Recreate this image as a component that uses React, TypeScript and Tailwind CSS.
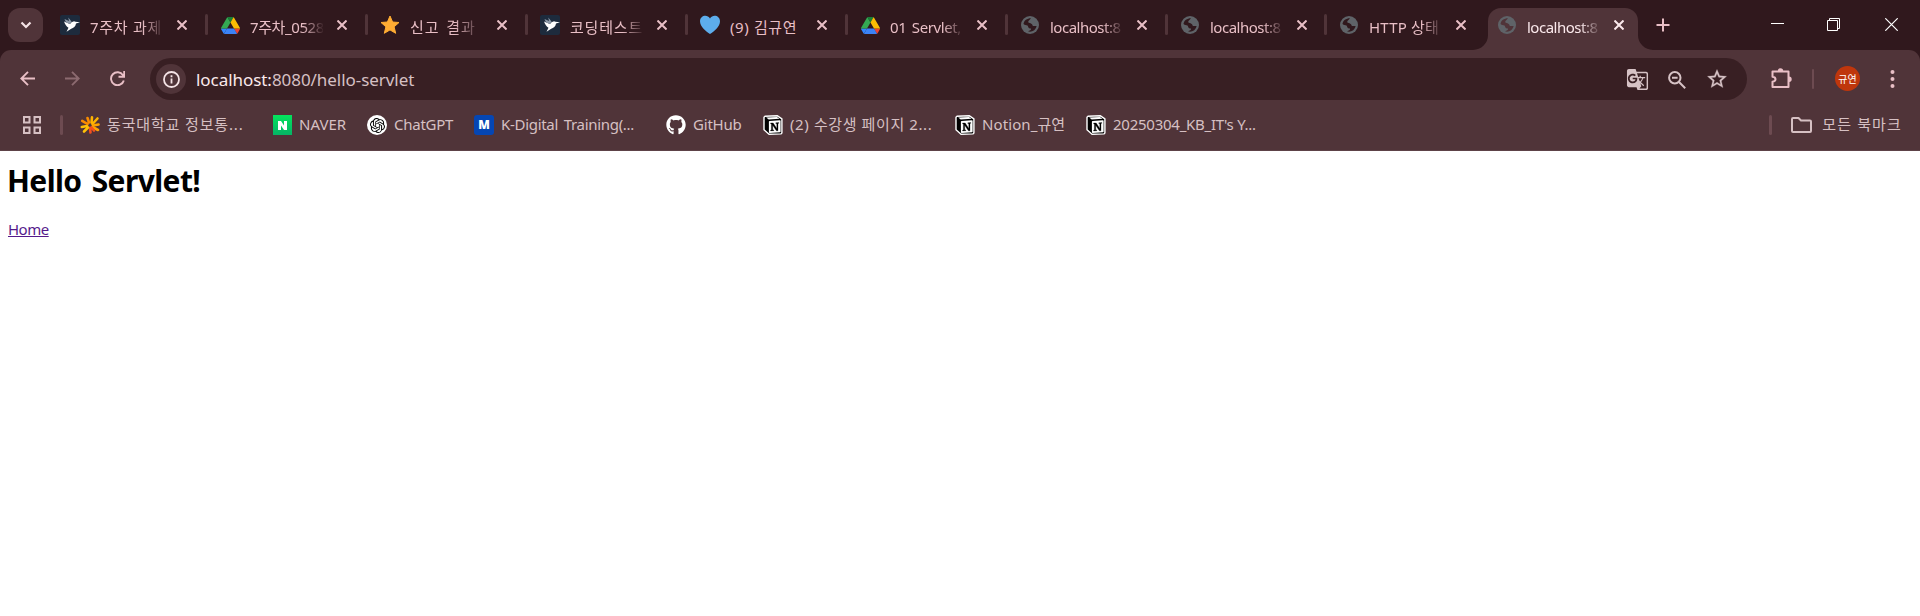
import React from "react";
import { FaGithub } from "react-icons/fa";
import { SiOpenai } from "react-icons/si";
import { MdGTranslate } from "react-icons/md";

const Swift = () => (
  <svg className="size-5" viewBox="0 0 20 20">
    <rect width="20" height="20" rx="2" fill="#1d2b3d" />
    <path d="M4 6.500 10 9 11.500 7.200 14 6.200l1.500.6L20 7.200l-4 1.300c-.3 3-2.500 4.600-4.800 5.300L6.500 16.800l2-4C6.500 11.500 5 9.500 4 6.500Z" fill="#fff" />
    <path d="M4.500 4 9 6 8.300 2.500 11.500 6.500 10 9 6 7.500Z" fill="#8c99a8" />
  </svg>
);

const Drive = () => (
  <svg className="size-[19px]" viewBox="0 0 87.300 78">
    <path d="m6.600 66.850 3.850 6.650c.8 1.400 1.950 2.500 3.300 3.300l13.750-23.800h-27.500c0 1.550.4 3.100 1.200 4.500z" fill="#3186ff" />
    <path d="m43.650 25-13.750-23.800c-1.350.8-2.500 1.900-3.300 3.300l-25.400 44a9.060 9.060 0 0 0 -1.200 4.500h27.500z" fill="#34a853" />
    <path d="m73.550 76.800c1.350-.8 2.500-1.900 3.300-3.300l1.600-2.750 7.650-13.250c.8-1.400 1.200-2.950 1.200-4.500h-27.500l5.850 11.500z" fill="#ea4335" />
    <path d="m43.650 25 13.750-23.800c-1.350-.8-2.900-1.200-4.500-1.200h-18.500c-1.600 0-3.150.45-4.500 1.200z" fill="#188038" />
    <path d="m59.800 53h-32.300l-13.750 23.800c1.350.8 2.900 1.200 4.500 1.200h50.800c1.600 0 3.150-.45 4.500-1.200z" fill="#3b82f6" />
    <path d="m73.400 26.500-12.700-22c-.8-1.400-1.950-2.500-3.300-3.300l-13.750 23.800 16.150 28h27.450c0-1.550-.4-3.100-1.200-4.500z" fill="#fbbc04" />
  </svg>
);

const StarFav = () => (
  <svg className="size-5" viewBox="0 0 20 20">
    <path d="m10 1 2.600 6 6.400.5-4.900 4.300 1.600 6.500L10 14.900l-5.700 3.400 1.600-6.500L1 7.500 7.400 7Z" fill="#ffac33" stroke="#ffac33" strokeWidth="1" strokeLinejoin="round" />
  </svg>
);

const Heart = () => (
  <svg className="size-5" viewBox="0 0 20 20">
    <path d="M10 19C6 16.500 0 12 0 6.300 0 .3 7.500-1 10 3.500 12.500-1 20 .3 20 6.300 20 12 14 16.500 10 19Z" fill="#5dadec" />
  </svg>
);

const Globe = ({ land = "#30181d" }: { land?: string }) => (
  <svg className="size-[18px]" viewBox="0 0 18 18">
    <circle cx="9" cy="9" r="9" fill="#5f6368" />
    <path d="M2.500 8C3 4.500 6 2.300 10 2.300 9 4 7.200 4.500 7.200 6 7.500 7.500 11.500 6.800 11.800 10L15.600 10C15 13.500 12 15.700 9 15.700L7 15.300C8.500 14.500 10.500 14.200 10 12.500 7 12.500 7.500 11 6.500 9.500 5 9 4 9.200 2.500 8Z" fill={land} />
  </svg>
);

const Notion = () => (
  <svg className="size-5" viewBox="0 0 20 20">
    <path d="M2 1.200 14.500.8 18.900 3.800V18l-1 .9L6 19.300 1 14.800V2.200Z" fill="#000" stroke="#fff" strokeWidth="1.400" strokeLinejoin="round" />
    <path d="M3.200 2.500 14 2l2.500 1.700L5.700 4.500Z" fill="#fff" />
    <path d="M6.500 6 17 5.300l.6.500V16.800l-.6.500L6.500 18l-.6-.5V6.600Z" fill="#fff" />
    <path d="M7.600 8h2.600l3.600 5.400V8.700l-1-.2v-.7l3-.2v.7l-.8.300v7.200h-1.600L9.700 10.200v4.500l1.100.3v.7l-3.200.2v-.7l.8-.4V8.900l-.8-.2Z" fill="#000" stroke="#000" strokeWidth=".3" />
  </svg>
);

const Flower = () => (
  <svg className="size-5" viewBox="0 0 20 20" fill="none" strokeWidth="2.600" strokeLinecap="round">
    <path d="M11.500 7.500 12 2.300M12.500 9 17.500 3.500" stroke="#ffb400" />
    <path d="M13 10.500 18.500 9.500M12.500 12 18 15" stroke="#ffa200" />
    <path d="M10 12.800 10.500 17.500M11.500 12.500 14 15.500" stroke="#f4511e" />
    <path d="M8 12.500 4 16.500M7 11 1.800 12" stroke="#ffc107" />
    <path d="M7.500 9 2.200 5.800M9 7.500 7.500 3" stroke="#fb8c00" />
  </svg>
);

const CloseX = () => (
  <svg className="size-[10px]" viewBox="0 0 10 10" fill="none" stroke="currentColor" strokeWidth="2">
    <path d="M.5.5 9.500 9.500M9.500.5.5 9.500" />
  </svg>
);

type TabItem = { icon: React.ReactNode; text: string; cls: string; track: string };

const fadeEarly = "[mask-image:linear-gradient(to_right,#000_60%,transparent_100%)]";
const fadeLate = "[mask-image:linear-gradient(to_right,#000_72%,transparent_102%)]";

const tabs: TabItem[] = [
  { icon: <Swift />, text: "7주차 과제", cls: "w-[160px]", track: `tracking-[0.7px] ${fadeLate}` },
  { icon: <Drive />, text: "7주차_0528", cls: "w-[160px]", track: `tracking-[-0.4px] ${fadeLate}` },
  { icon: <StarFav />, text: "신고 결과", cls: "w-[160px]", track: `tracking-[0.9px] [word-spacing:2px] ${fadeEarly}` },
  { icon: <Swift />, text: "코딩테스트", cls: "w-[160px]", track: `tracking-[0.8px] ${fadeLate}` },
  { icon: <Heart />, text: "(9) 김규연", cls: "w-[160px]", track: "tracking-[0.6px]" },
  { icon: <Drive />, text: "01 Servlet,", cls: "w-[160px]", track: `tracking-[-0.4px] [word-spacing:2px] ${fadeLate}` },
  { icon: <Globe />, text: "localhost:8", cls: "w-[160px]", track: `tracking-[-0.5px] ${fadeLate}` },
  { icon: <Globe />, text: "localhost:8", cls: "w-[159px]", track: `tracking-[-0.5px] ${fadeLate}` },
  { icon: <Globe />, text: "HTTP 상태", cls: "w-[161px]", track: `tracking-[0.2px] ${fadeLate}` },
];

function Tab({ t, last }: { t: TabItem; last: boolean }) {
  return (
    <div className={`flex h-[50px] shrink-0 items-center pl-3 text-[#e9bfc6] ${t.cls}`}>
      <span className="flex w-5 shrink-0 justify-center">{t.icon}</span>
      <span className={`ml-[10px] w-[73px] shrink-0 overflow-hidden whitespace-nowrap pt-[4px] text-[15px] leading-6 ${t.track}`}>{t.text}</span>
      <span className="ml-[14px] flex shrink-0">
        <CloseX />
      </span>
      {!last && <span className="ml-auto mt-[-1px] h-[21px] w-[3px] rounded-sm bg-[#503439]" />}
    </div>
  );
}

function TabStrip() {
  return (
    <header className="flex h-[50px] bg-[#30181d]">
      <div className="ml-2 mr-[5px] mt-2 flex h-[34px] w-[35px] shrink-0 items-center justify-center rounded-[12px] bg-[#503439] text-[#f5e3e6]">
        <svg className="size-[12px]" viewBox="0 0 12 12" fill="none" stroke="currentColor" strokeWidth="2.200">
          <path d="m1.500 3.500 4.500 4.500 4.500-4.500" />
        </svg>
      </div>
      {tabs.map((t, i) => (
        <Tab key={i} t={t} last={i === tabs.length - 1} />
      ))}
      <div className="relative mt-2 flex h-[42px] w-[150px] shrink-0 items-start rounded-t-[13px] bg-[#503439] pl-[10px] text-[#fbe9ec]">
        <svg className="absolute bottom-0 left-[-15px] h-[15px] w-[15px]" viewBox="0 0 15 15">
          <path d="M15 0v15H0A15 15 0 0 0 15 0Z" fill="#503439" />
        </svg>
        <svg className="absolute bottom-0 right-[-15px] h-[15px] w-[15px]" viewBox="0 0 15 15">
          <path d="M0 0v15h15A15 15 0 0 1 0 0Z" fill="#503439" />
        </svg>
        <span className="mt-2">
          <Globe land="#503439" />
        </span>
        <span className={`ml-[11px] mt-[7px] w-[73px] shrink-0 overflow-hidden whitespace-nowrap text-[15px] leading-6 tracking-[-0.5px] ${fadeLate}`}>localhost:8</span>
        <span className="ml-[14px] mt-3">
          <CloseX />
        </span>
      </div>
      <svg className="ml-[18px] mt-[18px] size-[14px] text-[#e9bfc6]" viewBox="0 0 14 14" stroke="currentColor" strokeWidth="2">
        <path d="M7 .5v13M.5 7h13" />
      </svg>
      <div className="ml-auto flex gap-11 pr-[22px] pt-[18px] text-white">
        <svg className="size-[13px]" viewBox="0 0 13 13" stroke="currentColor">
          <path d="M0 5.500h13" />
        </svg>
        <svg className="mr-px size-[13px] -ml-px" viewBox="0 0 13 13" fill="none" stroke="currentColor">
          <path d="M.5 2.500h10v10H.5ZM2.500 2.500v-2h10v10h-2" />
        </svg>
        <svg className="size-[13px]" viewBox="0 0 13 13" stroke="currentColor" strokeWidth="1.200">
          <path d="M.3.3l12.400 12.400M12.700.3.3 12.700" />
        </svg>
      </div>
    </header>
  );
}

function Toolbar() {
  return (
    <div className="flex h-[50px] items-start rounded-t-[11px] bg-[#503439] pl-5 pt-2 text-[#e9bfc6]">
      <svg className="mt-[13px] size-[15px]" viewBox="0 0 15 15" fill="none" stroke="currentColor" strokeWidth="1.900">
        <path d="M15 7.500H1.500M8 .8 1.300 7.500 8 14.200" />
      </svg>
      <svg className="ml-[30px] mt-[13px] size-[15px] text-[#8c6a70]" viewBox="0 0 15 15" fill="none" stroke="currentColor" strokeWidth="1.900">
        <path d="M0 7.500h13.500M7 .8l6.700 6.700L7 14.200" />
      </svg>
      <svg className="ml-[30px] mt-[13px] size-[15px]" viewBox="0 0 15 15" fill="none" stroke="currentColor" strokeWidth="1.900">
        <path d="M13.800 9.500A6.500 6.500 0 1 1 13 4.200L14 5.500M14.200 0v5.800H8.500" />
      </svg>
      <div className="ml-[25px] flex h-[42px] w-[1597px] items-center rounded-full bg-[#381f23] pl-[6px] pr-[20px]">
        <span className="flex size-[30px] items-center justify-center rounded-full bg-[#503439] text-[#f5e3e6]">
          <svg className="size-[17px]" viewBox="0 0 17 17" fill="none" stroke="currentColor" strokeWidth="1.800">
            <circle cx="8.500" cy="8.500" r="7.500" />
            <path d="M8.500 7.500v5M8.500 4.300v1.900" />
          </svg>
        </span>
        <span className="ml-[10px] pt-px text-[17px] leading-6 tracking-[-0.05px] text-[#d6c0c3]">
          <span className="text-[#fbe9ec]">localhost:</span>8080/hello-servlet
        </span>
        <div className="ml-auto flex items-center text-[#d6c2c5]">
          <MdGTranslate className="mt-px size-[23px]" />
          <svg className="ml-[19px] mt-px size-[18px]" viewBox="0 0 18 18" fill="none" stroke="currentColor" strokeWidth="2">
            <circle cx="6.800" cy="6.800" r="5.700" />
            <path d="M11 11l6.200 6.200M4 6.800h5.600" />
          </svg>
          <svg className="ml-[21px] size-5" viewBox="1.500 1.500 21 21" fill="currentColor">
            <path stroke="currentColor" strokeWidth=".3" d="m22 9.240-7.190-.62L12 2 9.190 8.630 2 9.240l5.460 4.730L5.820 21 12 17.270 18.180 21l-1.630-7.030L22 9.240zM12 15.400l-3.760 2.270 1-4.280-3.320-2.880 4.380-.38L12 6.100l1.710 4.040 4.380.38-3.320 2.880 1 4.280L12 15.400z" />
          </svg>
        </div>
      </div>
      <svg className="ml-[23px] mt-[9px] size-[23px]" viewBox="0 0 23 23">
        <path d="M2.500 4.500h16v15.500h-16v-5.200c4-.6 4-4.500 0-5Z" fill="none" stroke="currentColor" strokeWidth="2" strokeLinejoin="round" />
        <path d="M7.800 4a2.700 2.700 0 0 1 5.400 0ZM19 9.600a2.700 2.700 0 0 1 0 5.400Z" fill="currentColor" />
      </svg>
      <span className="ml-[19px] mt-[11px] h-5 w-[2px] rounded bg-[#6d4b51]" />
      <span className="ml-[21px] mt-2 flex size-[25px] items-center justify-center rounded-full bg-[#bf360c] text-[10px] leading-none text-white">규연</span>
      <svg className="ml-[30px] mt-[11px] h-5 w-[5px]" viewBox="0 0 5 20" fill="currentColor">
        <circle cx="2.500" cy="3" r="2" />
        <circle cx="2.500" cy="10" r="2" />
        <circle cx="2.500" cy="17" r="2" />
      </svg>
    </div>
  );
}

const Naver = () => (
  <span className="ml-px flex h-5 w-[19px] items-center justify-center bg-gradient-to-b from-[#03e45c] to-[#05b465]">
    <svg className="h-[9px] w-[9px]" viewBox="0 0 9 9">
      <path d="M0 0h3l3 4.500V0h3v9H6L3 4.500V9H0Z" fill="#fff" />
    </svg>
  </span>
);

const KDigital = () => (
  <span className="flex size-5 items-center justify-center rounded-[3px] bg-[#0546b4] text-[12px] font-black text-white">M</span>
);

const ChatGpt = () => (
  <span className="flex size-5 items-center justify-center rounded-full bg-white text-black">
    <SiOpenai className="size-[15px]" />
  </span>
);

const bookmarks = [
  { icon: <Flower />, text: "동국대학교 정보통...", w: "w-[192px]", track: "tracking-[0.85px]" },
  { icon: <Naver />, text: "NAVER", w: "w-[95px]", track: "" },
  { icon: <ChatGpt />, text: "ChatGPT", w: "w-[107px]", track: "tracking-[-0.25px]" },
  { icon: <KDigital />, text: "K-Digital Training(...", w: "w-[192px]", track: "tracking-[-0.3px] [word-spacing:2px]" },
  { icon: <FaGithub className="size-5 text-white" />, text: "GitHub", w: "w-[97px]", track: "tracking-[-0.2px]" },
  { icon: <Notion />, text: "(2) 수강생 페이지 2...", w: "w-[192px]", track: "tracking-[0.6px]" },
  { icon: <Notion />, text: "Notion_규연", w: "w-[131px]", track: "tracking-[0.1px]" },
  { icon: <Notion />, text: "20250304_KB_IT's Y...", w: "w-[192px]", track: "tracking-[-0.25px]" },
];

function BookmarksBar() {
  return (
    <div className="flex h-[51px] items-center border-b border-[#5d4247] bg-[#503439] pl-[23px] pr-[18px] text-[15px] leading-6 text-[#d6c0c3]">
      <svg className="size-[18px]" viewBox="0 0 18 18" fill="none" stroke="currentColor" strokeWidth="2">
        <path d="M1 1h5.500v5.500H1ZM11.500 1H17v5.500h-5.500ZM1 11.500h5.500V17H1ZM11.500 11.500H17V17h-5.500Z" />
      </svg>
      <span className="ml-[19px] mr-[17px] h-5 w-[3px] rounded bg-[#6d4b51]" />
      {bookmarks.map((b) => (
        <span key={b.text} className={`flex shrink-0 items-center whitespace-nowrap ${b.w}`}>
          <span className="mr-[7px] flex w-5 shrink-0">{b.icon}</span>
          <span className={`pb-[2px] ${b.track}`}>{b.text}</span>
        </span>
      ))}
      <span className="ml-auto h-5 w-[3px] rounded bg-[#6d4b51]" />
      <svg className="ml-[19px] h-4 w-[21px]" viewBox="0 0 21 16" fill="none" stroke="currentColor" strokeWidth="2" strokeLinejoin="round">
        <path d="M1 2q0-1 1-1h5.500l2.500 2.500h9q1 0 1 1V14q0 1-1 1H2q-1 0-1-1Z" />
      </svg>
      <span className="ml-[10px] pb-[2px] tracking-[1.150px]">모든 북마크</span>
    </div>
  );
}

export default function App() {
  return (
    <div className="flex h-[616px] w-[1920px] flex-col overflow-hidden bg-white font-['Noto_Sans','Noto_Sans_CJK_KR',sans-serif]">
      <TabStrip />
      <div className="bg-[#30181d]">
        <Toolbar />
      </div>
      <BookmarksBar />
      <main className="flex flex-col items-start px-[7px] text-black">
        <h1 className="mt-[9px] text-[30px] font-bold leading-[42px] tracking-[-0.6px] [word-spacing:3px]">Hello Servlet!</h1>
        <a className="ml-px mt-[15px] text-[15px] leading-6 tracking-[-0.5px] text-[#551a8b] underline">Home</a>
      </main>
    </div>
  );
}
